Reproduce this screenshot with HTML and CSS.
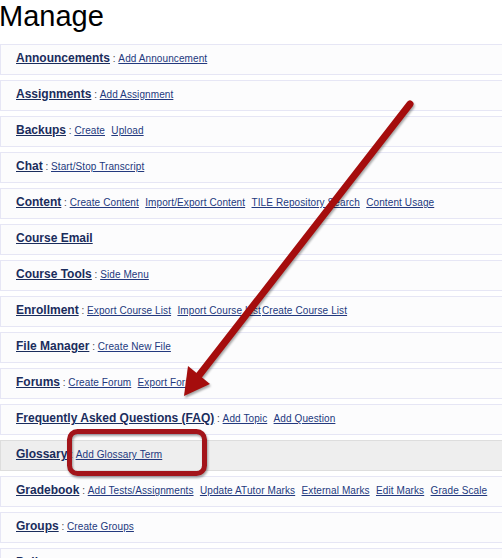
FILE: index.html
```html
<!DOCTYPE html>
<html lang="en">
<head>
    <meta charset="UTF-8">
    <meta name="viewport" content="width=device-width, initial-scale=1.0">
    <title>Manage</title>
    <link rel="stylesheet" href="styles.css">
</head>
<body>
    <h1>Manage</h1>

    <div class="tool-list">
        <div class="tool-row">
            <a class="tool-name" href="#">Announcements</a><span class="sep"> : </span><a class="sub-link" href="#">Add Announcement</a>
        </div>
        <div class="tool-row">
            <a class="tool-name" href="#">Assignments</a><span class="sep"> : </span><a class="sub-link" href="#">Add Assignment</a>
        </div>
        <div class="tool-row">
            <a class="tool-name" href="#">Backups</a><span class="sep"> : </span><a class="sub-link" href="#">Create</a> <a class="sub-link" href="#">Upload</a>
        </div>
        <div class="tool-row">
            <a class="tool-name" href="#">Chat</a><span class="sep"> : </span><a class="sub-link" href="#">Start/Stop Transcript</a>
        </div>
        <div class="tool-row">
            <a class="tool-name" href="#">Content</a><span class="sep"> : </span><a class="sub-link" href="#">Create Content</a> <a class="sub-link" href="#">Import/Export Content</a> <a class="sub-link" href="#">TILE Repository Search</a> <a class="sub-link" href="#">Content Usage</a>
        </div>
        <div class="tool-row">
            <a class="tool-name" href="#">Course Email</a>
        </div>
        <div class="tool-row">
            <a class="tool-name" href="#">Course Tools</a><span class="sep"> : </span><a class="sub-link" href="#">Side Menu</a>
        </div>
        <div class="tool-row">
            <a class="tool-name" href="#">Enrollment</a><span class="sep"> : </span><a class="sub-link" href="#">Export Course List</a> <a class="sub-link" href="#">Import Course List</a><a class="sub-link tight" href="#">Create Course List</a>
        </div>
        <div class="tool-row">
            <a class="tool-name" href="#">File Manager</a><span class="sep"> : </span><a class="sub-link" href="#">Create New File</a>
        </div>
        <div class="tool-row">
            <a class="tool-name" href="#">Forums</a><span class="sep"> : </span><a class="sub-link" href="#">Create Forum</a> <a class="sub-link" href="#">Export Forum</a>
        </div>
        <div class="tool-row">
            <a class="tool-name" href="#">Frequently Asked Questions (FAQ)</a><span class="sep"> : </span><a class="sub-link" href="#">Add Topic</a> <a class="sub-link" href="#">Add Question</a>
        </div>
        <div class="tool-row selected">
            <a class="tool-name" href="#">Glossary</a><span class="sep"> : </span><a class="sub-link" href="#">Add Glossary Term</a>
        </div>
        <div class="tool-row">
            <a class="tool-name" href="#">Gradebook</a><span class="sep"> : </span><a class="sub-link" href="#">Add Tests/Assignments</a> <a class="sub-link" href="#">Update ATutor Marks</a> <a class="sub-link" href="#">External Marks</a> <a class="sub-link" href="#">Edit Marks</a> <a class="sub-link" href="#">Grade Scale</a>
        </div>
        <div class="tool-row">
            <a class="tool-name" href="#">Groups</a><span class="sep"> : </span><a class="sub-link" href="#">Create Groups</a>
        </div>
        <div class="tool-row">
            <a class="tool-name" href="#">Polls</a><span class="sep"> : </span><a class="sub-link" href="#">Create Poll</a>
        </div>
    </div>

    <!-- Callout drawn over the list -->
    <svg class="callout" width="502" height="558" viewBox="0 0 502 558">
        <line x1="410" y1="104" x2="197" y2="378" stroke="#a50d0d" stroke-width="7" stroke-linecap="round"/>
        <polygon points="184,396 210,384 188,366" fill="#a50d0d"/>
        <rect x="69.5" y="431.5" width="135" height="42" rx="8" ry="8" fill="none" stroke="#a3141a" stroke-width="5"/>
    </svg>
</body>
</html>
```

FILE: styles.css
```css
html, body {
    overflow: hidden;
}
body {
    margin: 0;
    font-family: "Liberation Sans", Arial, sans-serif;
    background-color: white;
    position: relative;
}
h1 {
    font-size: 29px;
    font-weight: normal;
    line-height: 32px;
    margin: 0 0 12px -1px;
    color: #000;
}
.tool-list {
    margin-right: -10px;
}
.tool-row {
    font-size: 12px;
    height: 26px;
    line-height: 26px;
    padding: 0 0 3px 15px;
    margin-bottom: 5px;
    border: 1px solid #e6e6f5;
    background-color: #fcfcfd;
    white-space: nowrap;
}
.tool-row.selected {
    background-color: #eeeeee;
    border-color: #dddddd;
}
.tool-name {
    font-size: 12px;
    font-weight: bold;
    color: #1a2c5c;
}
.sep {
    font-size: 10px;
    color: #444;
}
.sub-link {
    font-size: 10px;
    letter-spacing: 0.1px;
    color: #23397e;
    margin-left: 3px;
}
.sep + .sub-link {
    margin-left: 0;
}
.sub-link.tight {
    margin-left: 1px;
}
.callout {
    position: absolute;
    top: 0;
    left: 0;
    pointer-events: none;
    filter: drop-shadow(1px 2px 1px rgba(0, 0, 0, 0.35));
}
```
